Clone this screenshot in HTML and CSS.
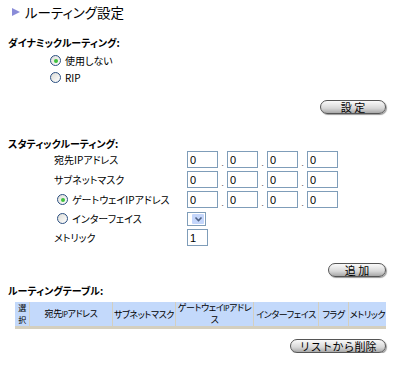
FILE: index.html
```html
<!DOCTYPE html>
<html lang="ja">
<head>
  <meta charset="UTF-8">
  <title>ルーティング設定</title>
  <link rel="stylesheet" href="styles.css">
</head>
<body>

  <h1 class="page-title"><span class="arrow"></span>ルーティング設定</h1>

  <h2 class="section-title">ダイナミックルーティング:</h2>
  <div class="radio-list">
    <label class="radio-row"><span class="radio on"></span>使用しない</label>
    <label class="radio-row"><span class="radio"></span>RIP</label>
  </div>
  <div class="btn-row set"><button class="pill wide">設 定</button></div>

  <h2 class="section-title static">スタティックルーティング:</h2>
  <div class="static-form">
    <div class="lbl">宛先IPアドレス</div>
    <div class="ip">
      <input class="oct" value="0"><span class="dot">.</span><input class="oct" value="0"><span class="dot">.</span><input class="oct" value="0"><span class="dot">.</span><input class="oct" value="0">
    </div>

    <div class="lbl">サブネットマスク</div>
    <div class="ip">
      <input class="oct" value="0"><span class="dot">.</span><input class="oct" value="0"><span class="dot">.</span><input class="oct" value="0"><span class="dot">.</span><input class="oct" value="0">
    </div>

    <div class="lbl with-radio"><span class="radio on"></span>ゲートウェイIPアドレス</div>
    <div class="ip">
      <input class="oct" value="0"><span class="dot">.</span><input class="oct" value="0"><span class="dot">.</span><input class="oct" value="0"><span class="dot">.</span><input class="oct" value="0">
    </div>

    <div class="lbl with-radio short"><span class="radio"></span>インターフェイス</div>
    <div class="ip short">
      <span class="select"><span class="select-btn">
        <svg width="9" height="6" viewBox="0 0 9 6"><path d="M1.5 1.5 L4.5 4.5 L7.5 1.5" fill="none" stroke="#4d6185" stroke-width="1.6"/></svg>
      </span></span>
    </div>

    <div class="lbl">メトリック</div>
    <div class="ip"><input class="metric" value="1"></div>
  </div>
  <div class="btn-row add"><button class="pill">追 加</button></div>

  <h2 class="section-title table-title">ルーティングテーブル:</h2>
  <table class="route-table">
    <tr>
      <th class="c-sel">選<br>択</th>
      <th class="c-dst">宛先<small>IP</small>アドレス</th>
      <th class="c-mask">サブネットマスク</th>
      <th class="c-gw">ゲートウェイ<small>IP</small>アドレ<br>ス</th>
      <th class="c-if">インターフェイス</th>
      <th class="c-flag">フラグ</th>
      <th class="c-met">メトリック</th>
    </tr>
  </table>
  <div class="btn-row del"><button class="pill long">リストから削除</button></div>

</body>
</html>
```

FILE: styles.css
```css
body {
  margin: 0;
  padding: 0 8px;
  background: #fff;
  color: #000;
  font-family: "Noto Sans CJK JP", "DejaVu Sans", sans-serif;
  font-feature-settings: "palt";
  font-size: 10px;
  width: 384px;
}

.page-title {
  margin: 0;
  padding: 2px 0 0 4px;
  height: 20px;
  font-size: 13.5px;
  font-weight: normal;
  line-height: 20px;
  display: flex;
  align-items: center;
}

.arrow {
  width: 0;
  height: 0;
  border-top: 4px solid transparent;
  border-bottom: 4px solid transparent;
  border-left: 8px solid #8a8cd8;
  margin-right: 5px;
}

.section-title {
  margin: 14px 0 0 0;
  font-size: 10px;
  font-weight: bold;
  line-height: 14px;
}

.radio-list {
  padding: 2px 0 0 42px;
}

.radio-row {
  display: flex;
  align-items: center;
  height: 17px;
}

.radio {
  width: 11px;
  height: 11px;
  border: 1px solid #2b4f81;
  border-radius: 50%;
  box-sizing: border-box;
  background: linear-gradient(135deg, #dcdcd6, #fff);
  margin-right: 4px;
  position: relative;
  flex: none;
}

.radio.on::after {
  content: "";
  position: absolute;
  left: 2.5px;
  top: 2.5px;
  width: 4px;
  height: 4px;
  border-radius: 50%;
  background: #3ec13e;
}

.btn-row {
  display: flex;
  justify-content: flex-end;
  padding-right: 6px;
}

.set { margin-top: 14px; }

.pill {
  height: 14px;
  width: 58px;
  padding: 0;
  border: 1px solid #555;
  border-radius: 7px;
  background: linear-gradient(#fafafa, #d8d8d8 60%, #a8a8a8);
  box-shadow: 1px 1px 1px #999;
  font-family: "Noto Sans CJK JP", sans-serif;
  font-size: 11px;
  line-height: 12px;
  color: #000;
}

.pill.wide { width: 66px; }
.pill.long { width: 96px; }

.static {
  margin-top: 23px;
}

.static-form {
  display: grid;
  grid-template-columns: 133px auto;
  padding-left: 46px;
  margin-top: 0;
  row-gap: 3px;
}

.lbl {
  display: flex;
  align-items: center;
  height: 17px;
}

.lbl.with-radio {
  margin-left: 3px;
}

.ip {
  display: flex;
  align-items: center;
  height: 17px;
}

.short { height: 15px; }

.oct, .metric {
  width: 31px;
  height: 17px;
  box-sizing: border-box;
  border: 1px solid #7f9db9;
  padding: 0 2px;
  font-family: "Liberation Sans", sans-serif;
  font-size: 11px;
  color: #000;
}

.metric { width: 21px; }

.dot {
  width: 9px;
  text-align: center;
  font-size: 8px;
  padding-top: 6px;
  color: #555;
}

.select {
  display: inline-block;
  width: 19px;
  height: 14px;
  border: 1px solid #7f9db9;
  box-sizing: border-box;
  padding: 1px 1px 1px 4px;
}

.select-btn {
  display: flex;
  align-items: center;
  justify-content: center;
  height: 10px;
  background: #c4d6fb;
  border-radius: 1px;
}

.add { margin-top: 17px; }

.table-title { margin-top: 7px; }

.route-table {
  margin: 4px 0 0 7px;
  border-collapse: separate;
  border-spacing: 0;
  table-layout: fixed;
  width: 371px;
  border-bottom: 3px solid #d4cfbf;
}

.route-table th {
  background: #c3d9fb;
  border-left: 1px solid #d4cfbf;
  font-weight: normal;
  font-size: 9px;
  line-height: 11px;
  height: 24px;
  padding: 0;
  color: #000;
  white-space: nowrap;
  letter-spacing: -0.4px;
}

.route-table th small {
  font-size: 7px;
}

.route-table th:first-child { border-left: none; }

.route-table th.c-sel {
  font-size: 8px;
  line-height: 12px;
}

.c-sel { width: 14px; }
.c-dst { width: 82px; }
.c-mask { width: 62px; }
.c-gw { width: 77px; }
.route-table th.c-gw { vertical-align: top; line-height: 12px; }
.c-if { width: 64px; }
.c-flag { width: 29px; }

.del { margin-top: 10px; }
```
